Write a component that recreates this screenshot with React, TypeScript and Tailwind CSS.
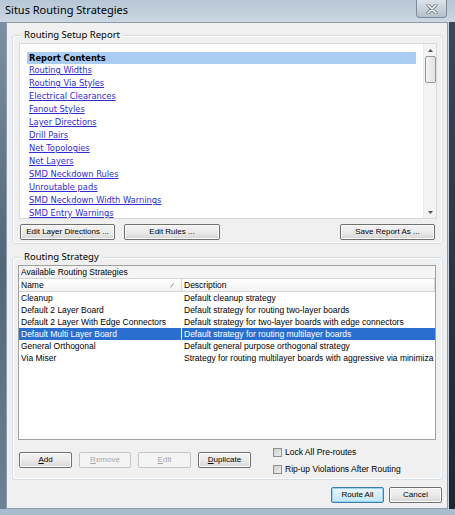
import React from "react";

const reportItems = [
  "Routing Widths",
  "Routing Via Styles",
  "Electrical Clearances",
  "Fanout Styles",
  "Layer Directions",
  "Drill Pairs",
  "Net Topologies",
  "Net Layers",
  "SMD Neckdown Rules",
  "Unroutable pads",
  "SMD Neckdown Width Warnings",
  "SMD Entry Warnings",
];

const strategies: [string, string][] = [
  ["Cleanup", "Default cleanup strategy"],
  ["Default 2 Layer Board", "Default strategy for routing two-layer boards"],
  ["Default 2 Layer With Edge Connectors", "Default strategy for two-layer boards with edge connectors"],
  ["Default Multi Layer Board", "Default strategy for routing multilayer boards"],
  ["General Orthogonal", "Default general purpose orthogonal strategy"],
  ["Via Miser", "Strategy for routing multilayer boards with aggressive via minimiza"],
];

function Btn({
  children,
  w,
  disabled,
  primary,
}: {
  children: React.ReactNode;
  w: string;
  disabled?: boolean;
  primary?: boolean;
}) {
  const base =
    "h-[16px] rounded-[2px] border flex items-center justify-center text-[8px] leading-none whitespace-nowrap " + w;
  if (disabled)
    return (
      <div className={base + " border-[#c2c6ca] bg-[#f4f4f4] text-[#a7a7a7]"}>{children}</div>
    );
  if (primary)
    return (
      <div className={base + " border-[#3c7fb1] bg-gradient-to-b from-[#eaf6fd] to-[#bee6fd] text-black shadow-[inset_0_0_0_1px_#9ed2f0]"}>
        {children}
      </div>
    );
  return (
    <div className={base + " border-[#707070] bg-gradient-to-b from-[#f2f2f2] via-[#ebebeb] to-[#d6d6d6] text-black shadow-[inset_0_0_0_1px_#fcfcfc]"}>
      {children}
    </div>
  );
}

function Check({ label }: { label: string }) {
  return (
    <div className="flex items-center h-[9px] gap-[3px]">
      <div className="w-[9px] h-[9px] border border-[#8e8f8f] bg-gradient-to-br from-[#cfcfcf] to-[#eeeeee]" />
      <span className="text-[8.5px] leading-none text-black">{label}</span>
    </div>
  );
}

export default function App() {
  return (
    <div
      className="w-[455px] h-[515px] flex flex-col overflow-hidden bg-gradient-to-b from-[#c7d4e0] to-[#a9bccd]"
      style={{ fontFamily: '"Liberation Sans", Arial, sans-serif' }}
    >
      {/* Title bar */}
      <div className="h-[22px] flex items-start shrink-0 bg-gradient-to-b from-[#b8c7d6] to-[#cbd7e2]">
        <span
          className="pl-[5px] pt-[3px] text-[11px] leading-[14px] text-black"
          style={{ fontFamily: '"Noto Sans", "Open Sans", sans-serif' }}
        >
          Situs Routing Strategies
        </span>
        <div className="ml-auto mr-[8px] w-[31px] h-[18px] rounded-b-[4px] border border-t-0 border-[#7d8b99] bg-gradient-to-b from-[#dde4ea] to-[#b3c0cc] flex items-center justify-center">
          <svg width="12" height="10" viewBox="0 0 12 10">
            <path d="M2 1 L10 9 M10 1 L2 9" stroke="#6b7785" strokeWidth="3.2" strokeLinecap="round" />
            <path d="M2 1 L10 9 M10 1 L2 9" stroke="#ffffff" strokeWidth="1.6" strokeLinecap="round" />
          </svg>
        </div>
      </div>

      <div className="flex-1 flex min-h-0">
        <div className="w-[6px] bg-gradient-to-b from-[#7d90a3] via-[#52657a] to-[#6d8296]" />
        {/* Client area */}
        <div className="w-[442px] h-[487px] bg-[#f0f0f0] border border-[#8d9cab] flex flex-col">
          {/* Group 1 */}
          <div className="relative mt-[12px] ml-[5px] mr-[4px] h-[209px] border border-[#d5dfe5] rounded-[3px] shadow-[inset_0_0_0_1px_#ffffff] flex flex-col">
            <span
              className="absolute left-[8px] -top-[7px] px-[3px] bg-[#f0f0f0] text-[9.5px] leading-[12px] text-black"
              style={{ fontFamily: '"Noto Sans", sans-serif' }}
            >
              Routing Setup Report
            </span>
            <div className="mt-[7px] ml-[6px] mr-[5px] h-[176px] bg-white border border-[#d9d9d9] flex overflow-hidden">
              <div className="flex-1 pt-[8px] pl-[7px] pr-[7px] overflow-hidden" style={{ fontFamily: '"DejaVu Sans", Verdana, sans-serif' }}>
                <div className="h-[12px] bg-[#a9cdf2] pl-[2px] text-[8.3px] leading-[13px] font-bold text-black">
                  Report Contents
                </div>
                {reportItems.map((t) => (
                  <div key={t} className="h-[13px] pl-[2px] text-[8.3px] leading-[13px] text-[#2e2ed4] underline whitespace-nowrap">
                    {t}
                  </div>
                ))}
              </div>
              {/* scrollbar */}
              <div className="w-[13px] bg-[#f3f3f3] border-l border-[#ececec] flex flex-col items-center">
                <div className="h-[12px] flex items-center justify-center">
                  <svg width="5" height="3" viewBox="0 0 5 3"><path d="M0 3 L2.5 0 L5 3Z" fill="#555" /></svg>
                </div>
                <div className="w-[11px] h-[27px] rounded-[2px] border border-[#979797] bg-gradient-to-r from-[#f4f4f4] to-[#e2e2e2]" />
                <div className="flex-1" />
                <div className="h-[12px] flex items-center justify-center">
                  <svg width="5" height="3" viewBox="0 0 5 3"><path d="M0 0 L2.5 3 L5 0Z" fill="#555" /></svg>
                </div>
              </div>
            </div>
            <div className="mt-[5px] ml-[7px] mr-[7px] flex">
              <Btn w="w-[95px]">Edit Layer Directions ...</Btn>
              <div className="ml-[9px]">
                <Btn w="w-[96px]">Edit Rules ...</Btn>
              </div>
              <div className="ml-auto">
                <Btn w="w-[95px]">Save Report As ...</Btn>
              </div>
            </div>
          </div>

          {/* Group 2 */}
          <div className="relative mt-[13px] ml-[5px] mr-[4px] h-[223px] border border-[#d5dfe5] rounded-[3px] shadow-[inset_0_0_0_1px_#ffffff] flex flex-col">
            <span
              className="absolute left-[8px] -top-[7px] px-[3px] bg-[#f0f0f0] text-[9.5px] leading-[12px] text-black"
              style={{ fontFamily: '"Noto Sans", sans-serif' }}
            >
              Routing Strategy
            </span>
            <div className="mt-[7px] ml-[5px] mr-[6px] h-[175px] bg-white border border-[#a0a0a0] flex flex-col overflow-hidden text-[8.5px] text-black">
              <div className="h-[13px] bg-[#f5f5f5] border-b border-[#d5d5d5] pl-[2px] leading-[13px]">
                Available Routing Strategies
              </div>
              <div className="h-[13px] flex border-b border-[#d5d5d5] bg-gradient-to-b from-[#ffffff] to-[#f3f3f3] leading-[13px]">
                <div className="w-[163px] pl-[2px] border-r border-[#d5d5d5] flex items-center">
                  <span>Name</span>
                  <svg className="ml-auto mr-[7px]" width="4" height="5" viewBox="0 0 4 5">
                    <path d="M0.5 4.5 L3.5 0.5" stroke="#8a8a8a" strokeWidth="1" />
                  </svg>
                </div>
                <div className="flex-1 pl-[2px] border-r border-[#d5d5d5]">Description</div>
              </div>
              {strategies.map(([n, d]) => {
                const sel = n === "Default Multi Layer Board";
                return (
                  <div
                    key={n}
                    className={
                      "h-[12px] flex leading-[12px] whitespace-nowrap " + (sel ? "text-white" : "")
                    }
                  >
                    <div className={"w-[163px] pl-[2px] border-r overflow-hidden " + (sel ? "bg-[#2a6fd0] border-white" : "border-transparent")}>
                      {n}
                    </div>
                    <div className={"flex-1 pl-[2px] overflow-hidden " + (sel ? "bg-[#2a6fd0]" : "")}>{d}</div>
                  </div>
                );
              })}
            </div>
            <div className="mt-[8px] ml-[6px] flex items-start">
              <div className="mt-[4px] flex gap-[7px]">
                <Btn w="w-[53px]"><span><u>A</u>dd</span></Btn>
                <Btn w="w-[52px]" disabled><span><u>R</u>emove</span></Btn>
                <Btn w="w-[53px]" disabled><span><u>E</u>dit</span></Btn>
                <Btn w="w-[53px]"><span><u>D</u>uplicate</span></Btn>
              </div>
              <div className="ml-[22px] flex flex-col gap-[8px]">
                <Check label="Lock All Pre-routes" />
                <Check label="Rip-up Violations After Routing" />
              </div>
            </div>
          </div>

          {/* Bottom buttons */}
          <div className="mt-[7px] mr-[5px] flex justify-end gap-[5px]">
            <Btn w="w-[53px]" primary>Route All</Btn>
            <Btn w="w-[53px]">Cancel</Btn>
          </div>
        </div>
        <div className="w-[7px] bg-gradient-to-b from-[#3a4756] to-[#1c2530] border-l border-[#c8d4df]" />
      </div>
      <div className="h-[6px] shrink-0" />
    </div>
  );
}
